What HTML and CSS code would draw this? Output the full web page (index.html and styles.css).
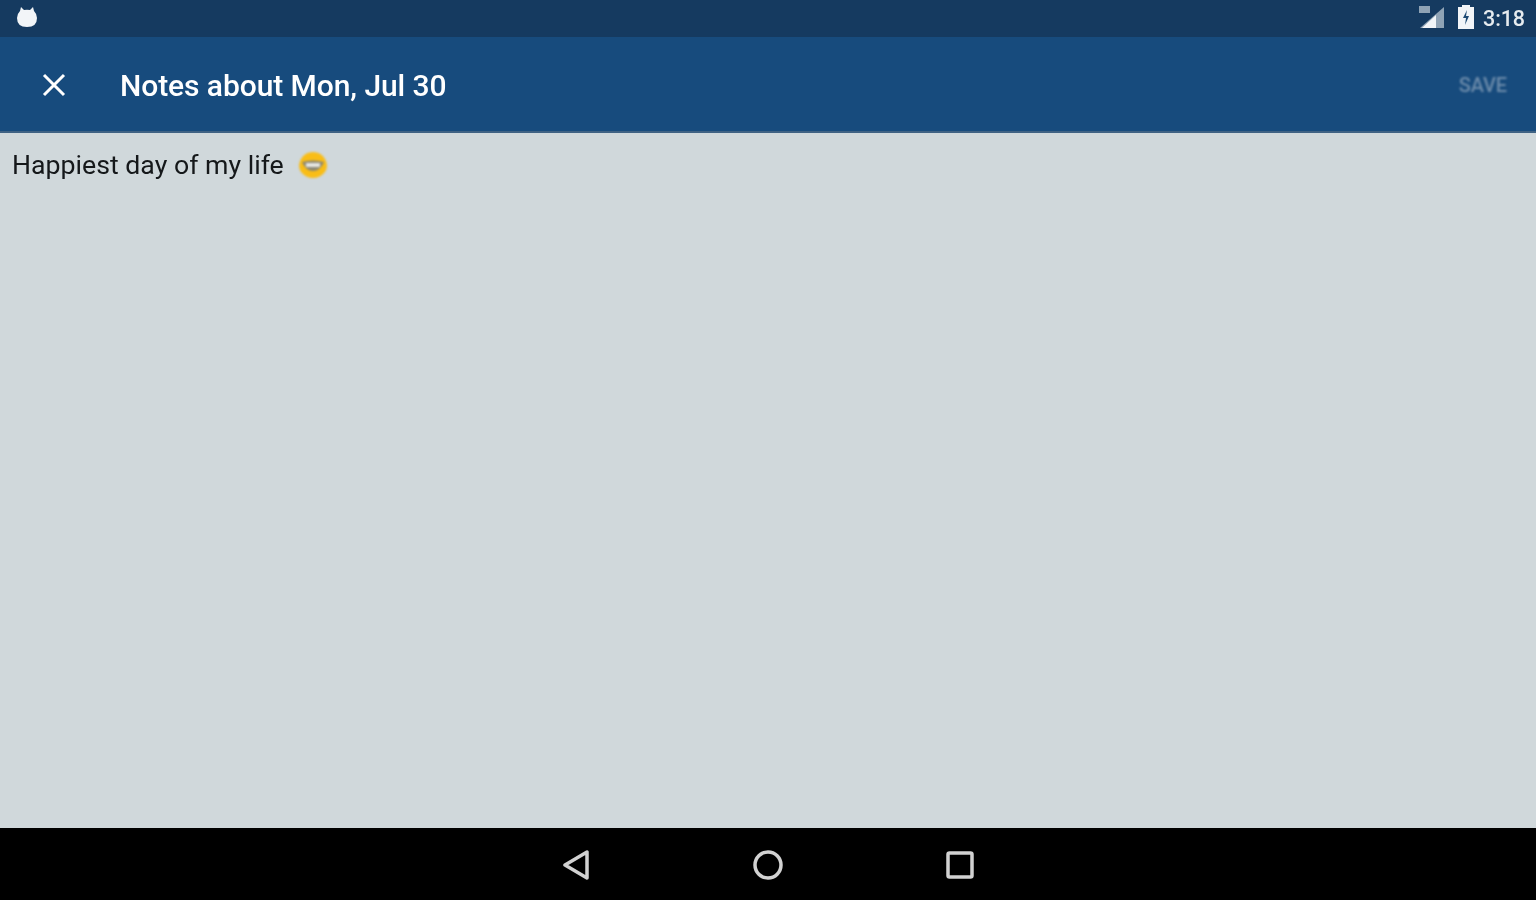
FILE: index.html
```html
<!DOCTYPE html>
<html lang="en">
<head>
  <meta charset="UTF-8">
  <title>Notes</title>
  <link rel="stylesheet" href="styles.css">
</head>
<body>
<div class="status-bar">
  <svg class="status-app" width="24" height="24" viewBox="0 0 24 24">
    <path d="M6 2 L9 5 Q12 4.300 15 5 L18 2 L19 6 Q22 9 22 13 Q22 22 12 22 Q2 22 2 13 Q2 9 5 6 Z" fill="#f2f5f8"/>
  </svg>
  <div class="status-right">
    <svg class="status-signal" width="30" height="26" viewBox="0 0 30 26">
      <path d="M27 3 V24 H3 Z" fill="#8fa3b5"/>
      <path d="M19 11 V24 H5 Z" fill="#f2f5f8"/>
      <path d="M2 2 H13 V9 H2 Z" fill="#8fa3b5"/>
    </svg>
    <svg class="status-battery" width="18" height="26" viewBox="0 0 18 26">
      <path d="M5 3 V1 H13 V3 H17 V25 H1 V3 Z" fill="#f2f5f8"/>
      <path d="M10 6 L6 14 H9 L8 21 L12 12 H9 Z" fill="#1d4a74"/>
    </svg>
    <span class="status-time">3:18</span>
  </div>
</div>

<div class="app-bar">
  <svg class="close-icon" width="24" height="24" viewBox="0 0 24 24">
    <path d="M2 2 L22 22 M22 2 L2 22" stroke="#fff" stroke-width="3" fill="none"/>
  </svg>
  <div class="app-title">Notes about Mon, Jul 30</div>
  <div class="save-btn">SAVE</div>
</div>

<div class="note-area">
  <span class="note-text">Happiest day of my life</span>
  <svg class="emoji" width="30" height="28" viewBox="0 0 30 28">
    <path d="M15 1 Q23 1 27 8 Q31 15 27 21 Q22 27 15 27 Q8 27 3 21 Q-1 15 3 8 Q7 1 15 1 Z" fill="#f9bd16"/>
    <path d="M4 11 Q15 8 26 11 Q22 20 15 20 Q8 20 4 11 Z" fill="#8a8674"/>
    <path d="M8 12 H22 V16 H8 Z" fill="#e8e8e4"/>
  </svg>
</div>

<div class="nav-bar">
  <svg class="nav-icon" width="30" height="32" viewBox="0 0 30 32">
    <path d="M26 3 V29 L4 16 Z" stroke="#d2d2d2" stroke-width="3.500" stroke-linejoin="round" fill="none"/>
  </svg>
  <svg class="nav-icon" width="30" height="32" viewBox="0 0 30 32">
    <circle cx="15" cy="16" r="13" stroke="#d2d2d2" stroke-width="3.500" fill="none"/>
  </svg>
  <svg class="nav-icon" width="30" height="32" viewBox="0 0 30 32">
    <rect x="3" y="4" width="24" height="24" rx="1.500" stroke="#d2d2d2" stroke-width="3.500" fill="none"/>
  </svg>
</div>
</body>
</html>
```

FILE: styles.css
```css
* {
  box-sizing: border-box;
}

html, body {
  margin: 0;
  height: 900px;
  overflow: hidden;
}

body {
  display: flex;
  flex-direction: column;
  font-family: Roboto, "Liberation Sans", sans-serif;
  background: #d0d8db;
}

svg {
  display: block;
  flex-shrink: 0;
  filter: blur(0.7px);
}

.status-bar {
  height: 37px;
  flex-shrink: 0;
  display: flex;
  align-items: center;
  justify-content: space-between;
  padding: 0 11px 3px 15px;
  background: #153a60;
}

.status-right {
  display: flex;
  align-items: center;
}

.status-signal {
  margin-right: 10px;
}

.status-battery {
  margin-right: 8px;
}

.status-time {
  font-size: 21.5px;
  font-weight: 500;
  letter-spacing: -0.1px;
  color: #e6ebef;
  filter: blur(0.7px);
  padding-top: 3px;
}

.app-bar {
  height: 96px;
  flex-shrink: 0;
  display: flex;
  align-items: center;
  padding: 2px 29px 0 42px;
  background: #174b7d;
  border-bottom: 2px solid #3f6283;
}

.close-icon {
  margin-right: 54px;
}

.app-title {
  flex: 1;
  padding-top: 1px;
  font-size: 30px;
  font-weight: 500;
  letter-spacing: -0.07px;
  color: #fff;
  filter: blur(0.6px);
}

.save-btn {
  font-size: 20px;
  font-weight: 500;
  letter-spacing: -0.1px;
  color: #6d8cab;
  filter: blur(1px);
}

.note-area {
  flex: 1;
  display: flex;
  align-items: flex-start;
  padding: 17px 12px 0;
  background: #d0d8db;
}

.note-text {
  font-size: 26.7px;
  line-height: 30px;
  color: #15181a;
  filter: blur(0.6px);
}

.emoji {
  margin: 1px 0 0 14px;
  filter: blur(1px);
}

.nav-bar {
  height: 72px;
  flex-shrink: 0;
  display: flex;
  align-items: center;
  justify-content: center;
  gap: 162px;
  padding-top: 2px;
  background: #000;
}
```
